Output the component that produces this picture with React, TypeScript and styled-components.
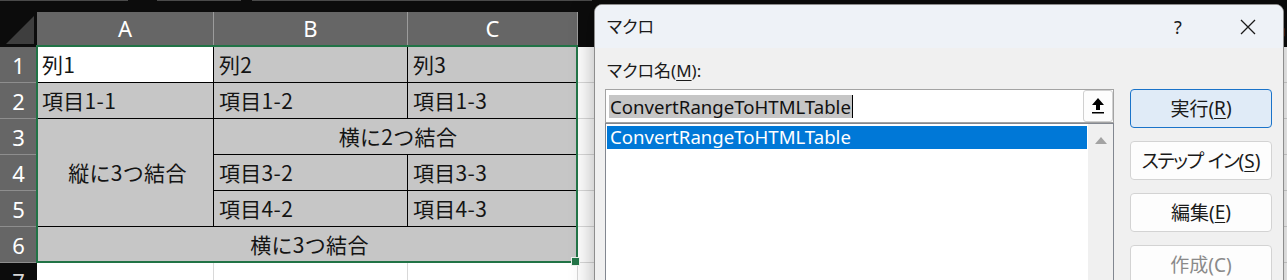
import React from 'react';
import styled, { createGlobalStyle } from 'styled-components';

const GlobalStyle = createGlobalStyle`
	html,
	body {
		margin: 0;
		padding: 0;
		background: #0c0c0c;
		overflow: hidden;
	}
	#root {
		width: 1287px;
		height: 280px;
	}
`;

const Screen = styled.div`
	position: relative;
	width: 1287px;
	height: 280px;
	overflow: hidden;
	background: #0c0c0c;
`;

// ---- spreadsheet ----

const Sheet = styled.div`
	display: grid;
	grid-template-columns: 37px 177px 194px 170px repeat(4, 200px);
	grid-template-rows: 12px 35px repeat(7, 36px);
	font-family: 'Noto Sans CJK JP', sans-serif;
`;

const TopStrip = styled.div`
	grid-column: 1 / -1;
	display: flex;
	background: #0c0c0c;
`;

const StripTab = styled.div<{ $width: number; $gap: number }>`
	width: ${p => p.$width}px;
	margin-right: ${p => p.$gap}px;
	height: 0;
	border-top: 1px solid #4a4a4a;
`;

const Corner = styled.div`
	display: flex;
	align-items: flex-end;
	justify-content: flex-end;
	padding: 0 3px 3px 0;
	background: #0c0c0c;
`;

const ColHead = styled.div<{ $selected?: boolean }>`
	display: flex;
	align-items: center;
	justify-content: center;
	padding-bottom: 3px;
	box-sizing: border-box;
	background: ${p => (p.$selected ? '#666666' : '#0c0c0c')};
	border-right: 1px solid ${p => (p.$selected ? '#9c9c9c' : '#2c2c2c')};
	color: ${p => (p.$selected ? '#ffffff' : '#d6d6d6')};
	font: 22px 'Noto Sans', sans-serif;
`;

const RowHead = styled.div<{ $row: number; $selected?: boolean }>`
	grid-column: 1;
	grid-row: ${p => p.$row};
	display: flex;
	align-items: center;
	justify-content: center;
	box-sizing: border-box;
	background: ${p => (p.$selected ? '#666666' : '#0c0c0c')};
	border-bottom: 1px solid ${p => (p.$selected ? '#8e8e8e' : '#2c2c2c')};
	color: ${p => (p.$selected ? '#ffffff' : '#d6d6d6')};
	font: 22px 'Noto Sans', sans-serif;
`;

type Tone = 'active' | 'selected' | 'plain';

const Cell = styled.div<{ $col: string; $row: string; $tone: Tone; $center?: boolean }>`
	grid-column: ${p => p.$col};
	grid-row: ${p => p.$row};
	display: flex;
	align-items: center;
	justify-content: ${p => (p.$center ? 'center' : 'flex-start')};
	padding: 0 0 2px 5px;
	box-sizing: border-box;
	min-width: 0;
	background: ${p => (p.$tone === 'selected' ? '#c6c6c6' : '#ffffff')};
	border-right: 1px solid ${p => (p.$tone === 'plain' ? '#d9d9d9' : '#000000')};
	border-bottom: 1px solid ${p => (p.$tone === 'plain' ? '#d9d9d9' : '#000000')};
	color: #141414;
	font-size: 21px;
	letter-spacing: 0.3px;
	white-space: nowrap;
`;

const Selection = styled.div`
	grid-column: 2 / 5;
	grid-row: 3 / 9;
	position: relative;
	z-index: 2;
	margin: -2px 0 0 -1px;
	border: 2px solid #217346;
	pointer-events: none;
`;

const FillHandle = styled.div`
	position: absolute;
	right: -3px;
	bottom: -4px;
	width: 7px;
	height: 7px;
	background: #217346;
	box-shadow: 0 0 0 1px #e8f0ea;
`;

// ---- dialog ----

const Dialog = styled.section`
	position: absolute;
	left: 594px;
	top: 4px;
	width: 690px;
	height: 310px;
	box-sizing: border-box;
	border: 1px solid #8d8d8d;
	border-radius: 8px 8px 0 0;
	background: #f0f0f0;
	box-shadow: 0 0 24px rgba(0, 0, 0, 0.32);
	overflow: hidden;
	font-family: 'Noto Sans', 'Noto Sans CJK JP', sans-serif;
	font-feature-settings: 'palt';
	color: #1a1a1a;
`;

const TitleBar = styled.header`
	display: flex;
	align-items: center;
	height: 43px;
	padding-left: 12px;
	background: #eef2f7;
	font-size: 17px;
`;

const TitleText = styled.div`
	flex: 1 1 auto;
	padding-bottom: 2px;
`;

const TitleButton = styled.div`
	display: flex;
	align-items: center;
	justify-content: center;
	width: 70px;
	height: 100%;
	font-size: 18px;
`;

const Body = styled.div`
	display: grid;
	grid-template-columns: 509px 142px;
	column-gap: 16px;
	padding: 0 11px 0 10px;
`;

const LeftCol = styled.div`
	display: flex;
	flex-direction: column;
`;

const Label = styled.div`
	display: flex;
	align-items: flex-end;
	height: 41px;
	box-sizing: border-box;
	padding: 0 0 6px 2px;
	font-size: 17px;
	line-height: 24px;
`;

const NameField = styled.div`
	display: flex;
	align-items: center;
	height: 34px;
	box-sizing: border-box;
	padding-left: 3px;
	border: 1px solid #a3a3a3;
	background: #ffffff;
`;

const SelectedText = styled.span`
	padding: 0 1px;
	background: #c6c6c6;
	font-size: 18.6px;
	line-height: 23px;
	color: #111111;
`;

const Caret = styled.span`
	width: 1px;
	height: 23px;
	background: #000000;
`;

const Grow = styled.div`
	flex: 1 1 auto;
`;

const UploadButton = styled.div`
	display: flex;
	align-items: center;
	justify-content: center;
	width: 30px;
	height: 32px;
	box-sizing: border-box;
	border: 1px solid #d0d0d0;
	border-radius: 3px;
	background: #fdfdfd;
`;

const ListBox = styled.div`
	display: flex;
	height: 170px;
	box-sizing: border-box;
	border: 1px solid #828790;
	background: #ffffff;
`;

const ListItems = styled.div`
	flex: 1 1 auto;
	padding: 2px 1px 0;
`;

const ListItem = styled.div<{ $active?: boolean }>`
	height: 23px;
	padding-left: 3px;
	background: ${p => (p.$active ? '#0078d7' : 'transparent')};
	color: ${p => (p.$active ? '#ffffff' : '#111111')};
	font-size: 18.6px;
	line-height: 22px;
`;

const ScrollBar = styled.div`
	display: flex;
	justify-content: center;
	width: 25px;
	padding-top: 13px;
	background: #f0f0f0;
`;

const ButtonCol = styled.div`
	display: flex;
	flex-direction: column;
	gap: 13px;
	padding-top: 41px;
`;

type Variant = 'primary' | 'default' | 'disabled';

const DialogButton = styled.div<{ $variant: Variant }>`
	display: flex;
	align-items: center;
	justify-content: center;
	height: 39px;
	box-sizing: border-box;
	border: 1px solid ${p => (p.$variant === 'primary' ? '#1a73c9' : '#d3d3d3')};
	border-radius: 4px;
	background: ${p => (p.$variant === 'primary' ? '#e0ebf7' : '#fdfdfd')};
	color: ${p => (p.$variant === 'disabled' ? '#8a8a8a' : '#1a1a1a')};
	font-size: 19px;
	padding-bottom: 2px;
	white-space: pre;
`;

const Kana = styled.span`
	letter-spacing: -1.4px;
`;

const Key = styled.span`
	text-decoration: underline;
	text-underline-offset: 3px;
	text-decoration-thickness: 1px;
`;

const selectedCols = ['A', 'B', 'C'];
const otherCols = ['D', 'E', 'F', 'G'];

const App = () => {
	const plainCells: React.ReactNode[] = [];
	for (let r = 3; r <= 9; r++) {
		for (let c = 5; c <= 8; c++) {
			plainCells.push(
				<Cell
					key={`p-${r}-${c}`}
					$col={`${c}`}
					$row={`${r}`}
					$tone="plain"
				/>,
			);
		}
	}

	return (
		<Screen>
			<GlobalStyle />
			<Sheet>
				<TopStrip>
					<StripTab
						$width={128}
						$gap={29}
					/>
					<StripTab
						$width={84}
						$gap={11}
					/>
					<StripTab
						$width={340}
						$gap={0}
					/>
				</TopStrip>

				<Corner>
					<svg
						width="28"
						height="28"
						viewBox="0 0 28 28"
					>
						<polygon
							points="0,28 28,0 28,28"
							fill="#3e3e3e"
						/>
					</svg>
				</Corner>
				{selectedCols.map(c => (
					<ColHead
						key={c}
						$selected
					>
						{c}
					</ColHead>
				))}
				{otherCols.map(c => (
					<ColHead key={c}>{c}</ColHead>
				))}

				{[1, 2, 3, 4, 5, 6, 7].map(n => (
					<RowHead
						key={n}
						$row={n + 2}
						$selected={n <= 6}
					>
						{n}
					</RowHead>
				))}

				<Cell $col="2" $row="3" $tone="active">列1</Cell>
				<Cell $col="3" $row="3" $tone="selected">列2</Cell>
				<Cell $col="4" $row="3" $tone="selected">列3</Cell>

				<Cell $col="2" $row="4" $tone="selected">項目1-1</Cell>
				<Cell $col="3" $row="4" $tone="selected">項目1-2</Cell>
				<Cell $col="4" $row="4" $tone="selected">項目1-3</Cell>

				<Cell $col="2" $row="5 / 8" $tone="selected" $center>
					縦に3つ結合
				</Cell>
				<Cell $col="3 / 5" $row="5" $tone="selected" $center>
					横に2つ結合
				</Cell>

				<Cell $col="3" $row="6" $tone="selected">項目3-2</Cell>
				<Cell $col="4" $row="6" $tone="selected">項目3-3</Cell>

				<Cell $col="3" $row="7" $tone="selected">項目4-2</Cell>
				<Cell $col="4" $row="7" $tone="selected">項目4-3</Cell>

				<Cell $col="2 / 5" $row="8" $tone="selected" $center>
					横に3つ結合
				</Cell>

				<Cell $col="2" $row="9" $tone="plain" />
				<Cell $col="3" $row="9" $tone="plain" />
				<Cell $col="4" $row="9" $tone="plain" />
				{plainCells}

				<Selection>
					<FillHandle />
				</Selection>
			</Sheet>

			<Dialog>
				<TitleBar>
					<TitleText>マクロ</TitleText>
					<TitleButton>?</TitleButton>
					<TitleButton>
						<svg
							width="16"
							height="16"
							viewBox="0 0 16 16"
						>
							<path
								d="M1 1 L15 15 M15 1 L1 15"
								stroke="#1a1a1a"
								strokeWidth="1.3"
								fill="none"
							/>
						</svg>
					</TitleButton>
				</TitleBar>

				<Body>
					<LeftCol>
						<Label>
							マクロ名(<Key>M</Key>):
						</Label>
						<NameField>
							<SelectedText>ConvertRangeToHTMLTable</SelectedText>
							<Caret />
							<Grow />
							<UploadButton>
								<svg
									width="12"
									height="16"
									viewBox="0 0 12 16"
								>
									<polygon
										points="6,0 12,7 8,7 8,12 4,12 4,7 0,7"
										fill="#000000"
									/>
									<rect
										x="0"
										y="14"
										width="12"
										height="1.5"
										fill="#000000"
									/>
								</svg>
							</UploadButton>
						</NameField>
						<ListBox>
							<ListItems>
								<ListItem $active>ConvertRangeToHTMLTable</ListItem>
							</ListItems>
							<ScrollBar>
								<svg
									width="12"
									height="7"
									viewBox="0 0 12 7"
								>
									<polygon
										points="0,7 6,0 12,7"
										fill="#a3a3a3"
									/>
								</svg>
							</ScrollBar>
						</ListBox>
					</LeftCol>

					<ButtonCol>
						<DialogButton $variant="primary">
							実行(<Key>R</Key>)
						</DialogButton>
						<DialogButton $variant="default">
							<span>
								<Kana>ステップ</Kana> <Kana>イン</Kana>(<Key>S</Key>)
							</span>
						</DialogButton>
						<DialogButton $variant="default">
							編集(<Key>E</Key>)
						</DialogButton>
						<DialogButton $variant="disabled">作成(C)</DialogButton>
					</ButtonCol>
				</Body>
			</Dialog>
		</Screen>
	);
};

export default App;
